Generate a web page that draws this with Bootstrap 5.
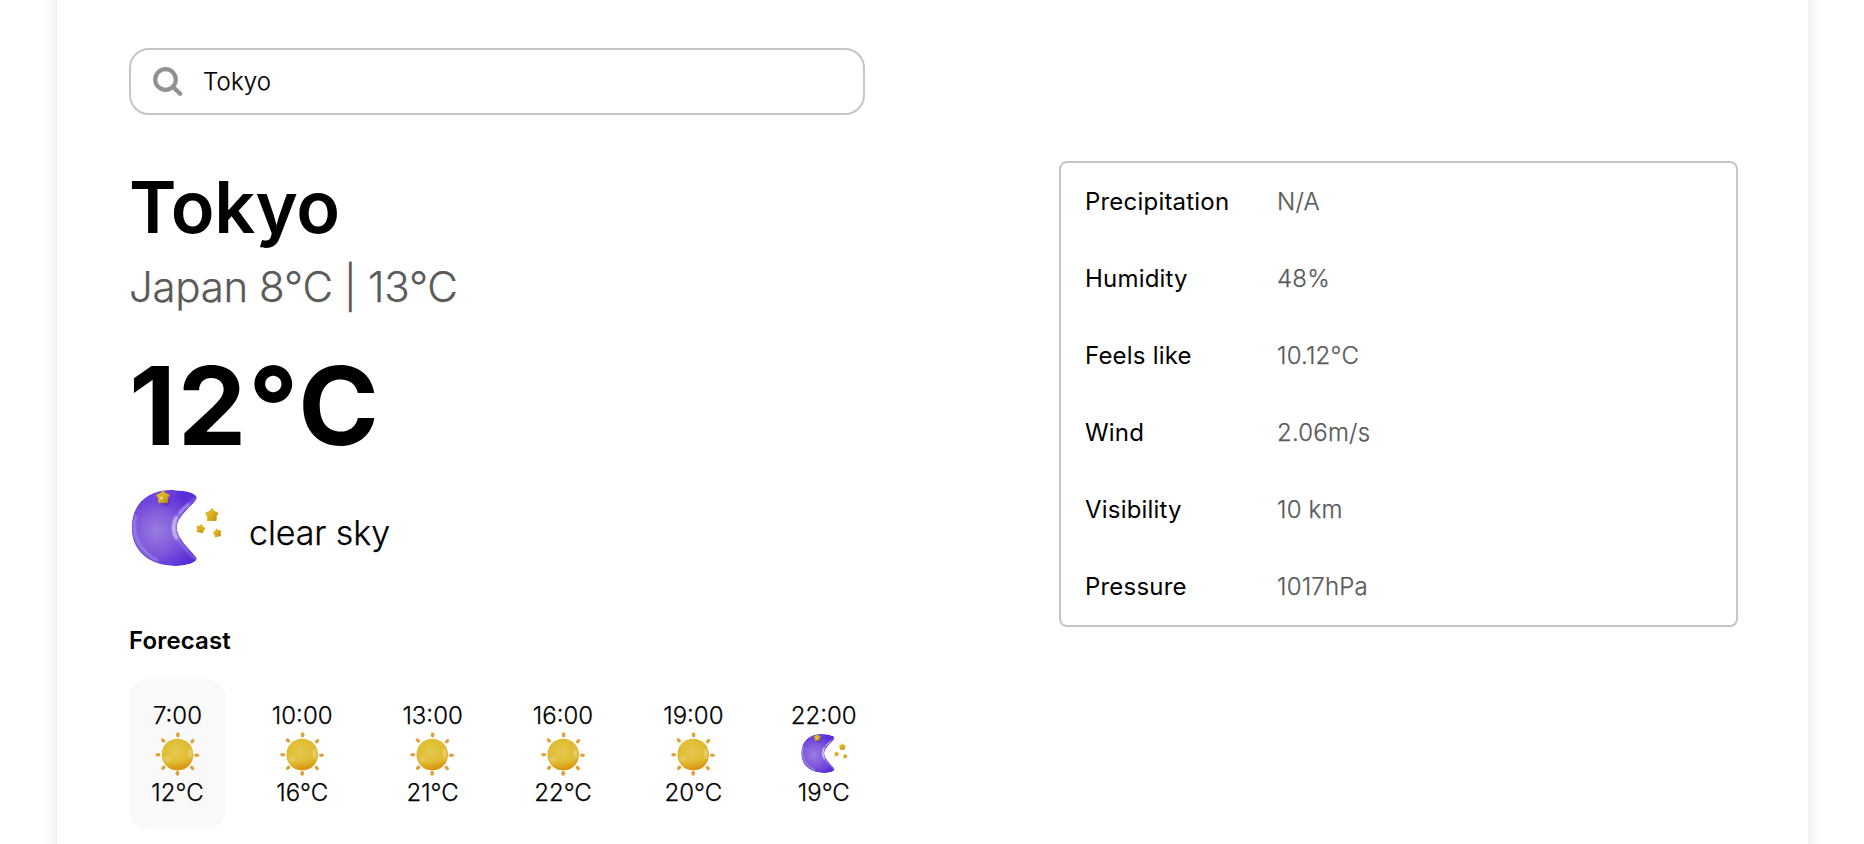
<!DOCTYPE html>
<html lang="en">
<head>
<meta charset="utf-8">
<meta name="viewport" content="width=device-width, initial-scale=1">
<title>Weather</title>
<link href="https://cdn.jsdelivr.net/npm/bootstrap@5.3.0/dist/css/bootstrap.min.css" rel="stylesheet">
<style>
body{font-family:Inter,sans-serif;font-weight:300;font-size:24px;line-height:29px;color:#000;background:#fff}
.page{width:1751px;height:calc(100% + 40px);margin:-20px 0 -20px 57px;padding:68px 70px 0 72px;box-shadow:0 0 14px rgba(0,0,0,.12);background:#fff}
.side-main{width:736px}
.search{height:67px;border:2px solid #c6c6c6;border-radius:20px;padding-left:22px}
.search input{font-weight:300;font-size:24px;line-height:29px;color:#000;padding:0;margin-left:20px;letter-spacing:.15px}
.search input,.range,.sky,.hours,.detail dd{-webkit-text-stroke:.25px currentColor}
.city{font-size:72px;line-height:87px;font-weight:600;margin:48px 0 0;letter-spacing:-.2px}
.range{font-size:42px;line-height:51px;color:#5a5a5a;margin-top:11px;letter-spacing:-.3px;word-spacing:-.3px}
.now{font-size:109px;line-height:131px;font-weight:700;margin-top:28px;letter-spacing:1.8px}
.sky{font-size:34px;line-height:41px;margin:8px 0 0 27px;letter-spacing:-.1px}
.sky-row{height:80px;margin-top:17px}
.moon-lg{margin-left:1px;margin-right:-1px}
.fc-title{font-weight:600;font-size:24px;line-height:29px;margin:58px 0 0;letter-spacing:.15px}
.hours{gap:22px;margin-top:24px;width:770px}
.hour{width:108.400px;height:150px;padding-top:22px;border-radius:20px}
.hour.active-hour{width:97px;background:#f9f9f9}
.hour svg{height:44px;margin:2px 0}
.details{width:679px;height:466px;border:2px solid #c6c6c6;border-radius:8px;margin-top:113px}
.detail{height:77px;padding-left:24px}
.detail dt{width:192px;font-weight:400;letter-spacing:.2px}
.detail dd{color:#5a5a5a;letter-spacing:.2px}
</style>
</head>
<body class="vh-100 overflow-hidden d-flex flex-column">
<svg width="0" height="0" class="position-absolute" aria-hidden="true">
<defs>
<radialGradient id="mg" gradientUnits="userSpaceOnUse" cx="27" cy="43" r="42"><stop offset="0" stop-color="#9a7ce0"/><stop offset=".5" stop-color="#8059dc"/><stop offset="1" stop-color="#5a2ed8"/></radialGradient>
<linearGradient id="st" x1="0" y1="0" x2="1" y2="1"><stop offset="0" stop-color="#e0bd38"/><stop offset=".5" stop-color="#d9b021"/><stop offset="1" stop-color="#b68b0c"/></linearGradient>
<radialGradient id="sg" cx=".45" cy=".42" r=".6"><stop offset="0" stop-color="#e3c65a"/><stop offset=".35" stop-color="#e2c33b"/><stop offset=".8" stop-color="#deb930"/><stop offset="1" stop-color="#d9a620"/></radialGradient>
<linearGradient id="so" x1="0" y1="0" x2=".15" y2="1"><stop offset=".75" stop-color="#d98b08" stop-opacity="0"/><stop offset="1" stop-color="#d98600" stop-opacity=".6"/></linearGradient>
<filter id="b1" x="-50%" y="-50%" width="200%" height="200%"><feGaussianBlur stdDeviation="1.2"/></filter>
<filter id="b2" x="-50%" y="-50%" width="200%" height="200%"><feGaussianBlur stdDeviation="2.4"/></filter>
<clipPath id="mc"><path id="mp" d="M45 2.2C18 .8 1.6 16 1.6 39.5C1.6 63 19 78 46 78C57 78 67 74.500 66.800 70.500C66.500 67 47 52 47 39.500C47 27 66.500 15 66.800 10C67 5.500 57 2.400 45 2.200Z"/></clipPath>
<path id="star" d="M0-6.500L2.300-3.500L6.400-1.900L4.600 1.500L4.300 5.900L0 5.600L-4.300 5.900L-4.600 1.500L-6.400-1.900L-2.300-3.500Z" fill="url(#st)" stroke="url(#st)" stroke-width=".8" stroke-linejoin="round"/>
<symbol id="moon" viewBox="0 0 93 80">
<g clip-path="url(#mc)"><use href="#mp" fill="url(#mg)"/>
<path d="M66 10C57 16 45 27 44.500 39.500C45 53 58 64 66 71" fill="none" stroke="#c5b5ee" stroke-width="2.200" opacity=".4" filter="url(#b1)"/>
<path d="M60 16Q53 20 49 26" fill="none" stroke="#fff" stroke-width="2" opacity=".5" filter="url(#b1)"/>
<path d="M47 28C42 36 42 43 47 51" fill="none" stroke="#fff" stroke-width="3" opacity=".6" filter="url(#b1)"/>
<path d="M6 27Q1 42 9 56Q16 67 28 73" fill="none" stroke="#b09bea" stroke-width="3" opacity=".6" filter="url(#b1)"/>
<path d="M18 10Q33 3 48 5" fill="none" stroke="#8f6ee2" stroke-width="3" opacity=".6" filter="url(#b2)"/>
<path d="M31 12l10 1-2 5-8-1z" fill="#4728ae" opacity=".5" filter="url(#b1)"/></g>
<use href="#star" transform="translate(33 8.800)"/><circle cx="31.500" cy="10" r="1.500" fill="#f5e5a0" opacity=".8"/>
<use href="#star" transform="translate(81.800 26.800)"/>
<use href="#star" transform="translate(70.600 40.500) scale(.68) rotate(12)"/>
<use href="#star" transform="translate(87.200 44.800) scale(.65) rotate(-12)"/>
</symbol>
<symbol id="sun" viewBox="0 0 44 44">
<g fill="#dda23c"><ellipse cx="22.400" cy="2.800" rx="1.900" ry="2.600"/><ellipse cx="36.900" cy="9.200" rx="1.700" ry="2.500" transform="rotate(40 36.900 9.200)"/><ellipse cx="41.200" cy="23.200" rx="2.500" ry="1.800"/><ellipse cx="36.600" cy="36" rx="1.800" ry="2.500" transform="rotate(-38 36.600 36)"/><ellipse cx="22" cy="41.200" rx="1.900" ry="2.500"/><ellipse cx="7.900" cy="35.700" rx="1.800" ry="2.500" transform="rotate(45 7.900 35.700)"/><ellipse cx="2.500" cy="22.700" rx="2.600" ry="1.800"/><ellipse cx="7.700" cy="8.500" rx="1.700" ry="2.600" transform="rotate(-45 7.700 8.500)"/></g>
<circle cx="22" cy="22.500" r="15.800" fill="url(#sg)"/><circle cx="22" cy="22.500" r="15.800" fill="url(#so)"/>
<ellipse cx="34.500" cy="21.500" rx="1.500" ry="5" fill="#f0dfa0" opacity=".65" filter="url(#b1)"/><ellipse cx="12" cy="27" rx="3" ry="2.500" fill="#efcf82" opacity=".65" filter="url(#b1)"/>
</symbol>
</defs>
</svg>
<main class="page flex-shrink-0 d-flex justify-content-between align-items-start">
<section class="side-main">
<div class="search d-flex align-items-center">
<svg width="30" height="30" viewBox="0 0 30 30" fill="none" stroke="#919191"><circle cx="12.500" cy="12.500" r="10.300" stroke-width="4.200"/><path d="M20 20l7.200 6.700" stroke-width="4.200" stroke-linecap="round"/></svg>
<input class="border-0 flex-grow-1 bg-transparent" type="text" value="Tokyo" aria-label="City">
</div>
<h1 class="city">Tokyo</h1>
<div class="range">Japan 8°C | 13°C</div>
<div class="now">12°C</div>
<div class="sky-row d-flex align-items-center"><svg class="moon-lg" width="93" height="80"><use href="#moon"/></svg><span class="sky">clear sky</span></div>
<h2 class="fc-title">Forecast</h2>
<div class="hours d-flex text-center">
<div class="hour active-hour d-flex flex-column"><span>7:00</span><svg><use href="#sun"/></svg><span>12°C</span></div>
<div class="hour d-flex flex-column"><span>10:00</span><svg><use href="#sun"/></svg><span>16°C</span></div>
<div class="hour d-flex flex-column"><span>13:00</span><svg><use href="#sun"/></svg><span>21°C</span></div>
<div class="hour d-flex flex-column"><span>16:00</span><svg><use href="#sun"/></svg><span>22°C</span></div>
<div class="hour d-flex flex-column"><span>19:00</span><svg><use href="#sun"/></svg><span>20°C</span></div>
<div class="hour d-flex flex-column"><span>22:00</span><svg viewBox="0 0 48 44"><use href="#moon" y="1" width="48" height="41"/></svg><span>19°C</span></div>
</div>
</section>
<dl class="details mb-0">
<div class="detail d-flex align-items-center"><dt>Precipitation</dt><dd class="mb-0">N/A</dd></div>
<div class="detail d-flex align-items-center"><dt>Humidity</dt><dd class="mb-0">48%</dd></div>
<div class="detail d-flex align-items-center"><dt>Feels like</dt><dd class="mb-0">10.12°C</dd></div>
<div class="detail d-flex align-items-center"><dt>Wind</dt><dd class="mb-0">2.06m/s</dd></div>
<div class="detail d-flex align-items-center"><dt>Visibility</dt><dd class="mb-0">10 km</dd></div>
<div class="detail d-flex align-items-center"><dt>Pressure</dt><dd class="mb-0">1017hPa</dd></div>
</dl>
</main>
<script src="https://cdn.jsdelivr.net/npm/bootstrap@5.3.0/dist/js/bootstrap.bundle.min.js"></script>
</body>
</html>
